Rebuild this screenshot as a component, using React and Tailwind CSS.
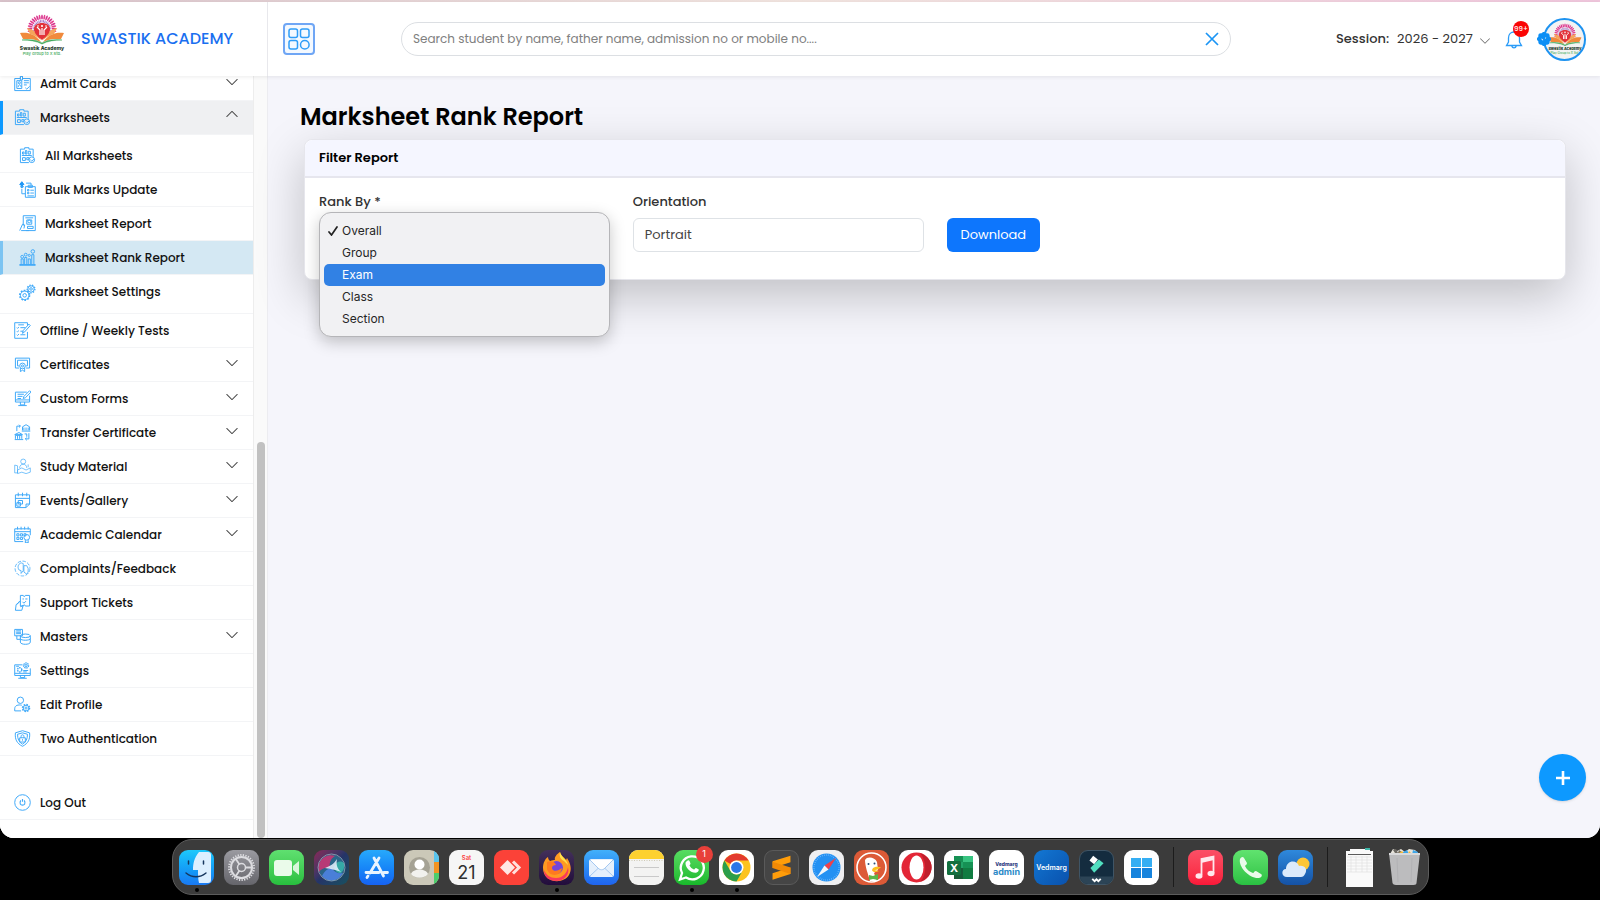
import { useState } from 'react';
import clsx from 'clsx';
import { BsChevronDown, BsChevronUp, BsPatchCheckFill } from 'react-icons/bs';

// Sidebar icons, 24x24 line drawings
const ICONS = {
  admit: (
    <>
      <path d="M1 5h8v-3h3v3h11v17H1z M4 8h7v11H4z M6 17c0-4 4-4 4 0 M14 8h7 M14 11h7 M14 14h4" />
      <circle cx="7.5" cy="11" r="1.5" />
      <path d="M16 18l2 2 4-4 M9 2v5h3V2" />
    </>
  ),
  marksheet: (
    <>
      <path d="M2 3h6V1h6v2h6v11M14 22H2V3 M5 10V7h2v3zM9 10V5h2v5zM13 10V6h3v4z M4 12h14 M5 15h4v4H5z M11 15h3v3h-3z" />
      <circle cx="18" cy="18" r="4" />
      <path d="M16 18l2 2 3-3" />
    </>
  ),
  bulk: (
    <>
      <path fill="#1b95f5" stroke="#1b95f5" d="M4 1l3 4H5v4H3V5H1z" />
      <path d="M2 8h5 M4 11v7h5 M10 3h7v3 M9 8h14v15H9z M13 6h6v3h-6z M12 12h2v2h-2z M12 16h2v2h-2z M16 13h5 M16 17h5 M12 21h9" />
    </>
  ),
  report: (
    <>
      <path d="M6 15V1h17v21H10 M9 4h11 M11 7h7v6h-7z M1 22l4-9 3 1-1 5 M12 16h8v3h-8z M3 22h11" />
      <circle cx="14.5" cy="9" r="2" />
    </>
  ),
  rank: (
    <>
      <path d="M1 22h22v1H1z M3 22v-8h3v8 M8 22V12h3v10 M13 22v-8h3v8 M18 22V8h3v14" />
      <circle cx="4.500" cy="11" r="2" />
      <circle cx="9.500" cy="8" r="2" />
      <circle cx="14.500" cy="9" r="1.500" />
      <circle cx="19.500" cy="3.500" r="2.500" />
    </>
  ),
  gears: (
    <>
      <circle cx="8" cy="16" r="6" />
      <circle cx="8" cy="16" r="7" strokeDasharray="2.400 2" strokeWidth="2" />
      <circle cx="8" cy="16" r="2.500" />
      <circle cx="17" cy="7" r="4.500" />
      <circle cx="17" cy="7" r="5.500" strokeDasharray="2 1.800" strokeWidth="1.800" />
      <circle cx="17" cy="7" r="1.800" />
    </>
  ),
  test: (
    <path d="M19 5V1H1v22h18v-9 M6 4h8 M4 8l1 1 2-2 M4 13l1 1 2-2 M4 18l1 1 2-2 M9 8h7 M9 13h4 M9 18h7 M12 16l1-4 8-9 2 2-8 9z" />
  ),
  certificate: (
    <>
      <path d="M7 17H2V3h20v14h-5 M5 6h14v8h-2 M7 14H5V6 M9 17v5l3-2 3 2v-5" />
      <circle cx="12" cy="14" r="4" />
      <circle cx="12" cy="14" r="1.500" />
    </>
  ),
  forms: (
    <path d="M18 3H2v14h20V8 M2 14h20 M9 17v4h6v-4 M6 22h12 M5 6h9 M5 9h7 M5 12h5 M13 12l1-3 8-8 2 2-8 8z" />
  ),
  transfer: (
    <path d="M11 10h12 M12 9V4l5-3 5 3v5 M14 5v4 M17 5v4 M20 5v4 M1 22h12 M2 21v-5h9v5 M1 15l6-3 5 3z M5 16v5 M8 16v5 M4 10V3h5 M7 1l2 2-2 2 M21 13v8h-5 M18 19l-2 2 2 2 M15 14h3v4" />
  ),
  study: (
    <g strokeOpacity="0.7">
      <circle cx="13" cy="5" r="3.500" />
      <path d="M8 14c0-7 10-7 10 0 M1 10l4 1v10h-4z M5 17l6-3 6 3 6-3v6l-6 2-6-2-6 2z M20 9v4" />
    </g>
  ),
  events: (
    <path d="M2 4h20v13l-5 5H2z M2 9h20 M6 1v5 M12 1v5 M18 1v5 M22 17h-5v5 M6 12h6v5H6z M4 15h5v5H4z" />
  ),
  calendar: (
    <>
      <path d="M1 4h22v9 M13 22H1V4 M1 8h22 M5 1v4 M10 1v4 M15 1v4 M20 1v4 M4 11h3v3H4z M9 11h3v3H9z M14 11h3v3h-3z M4 16h3v3H4z M9 16h3v3H9z" />
      <circle cx="18" cy="16" r="4" />
      <path d="M16 20v4l2-1 2 1v-4" />
    </>
  ),
  complaints: (
    <g strokeOpacity="0.8">
      <circle cx="12" cy="12" r="10.500" strokeDasharray="5 2" />
      <path d="M10 4c-5 2-5 7-3 10l3 1v4l3-4V5z M14 8h4l2 4v5l-2 3-4-3z" />
    </g>
  ),
  tickets: (
    <path d="M9 2h4c0 2 3 2 3 0h6v15h-6c0-2-3-2-3 0H9z M12 7h2 M16 7h3 M9 10l-6 5-1 8h9l2-7-4 2 M4 15l4-5 M12 11l2 2 3-3" />
  ),
  masters: (
    <>
      <path d="M1 2h11v9H1z M3 4h7 M3 6h7 M3 8h7 M4 11v5h5" />
      <ellipse cx="16" cy="11" rx="7" ry="2.500" />
      <path d="M9 11v9c0 4 14 4 14 0v-9 M9 15c0 3 14 3 14 0" />
    </>
  ),
  settings: (
    <>
      <path d="M12 4H1v15h22V9 M1 16h22 M9 19v3h6v-3 M6 23h12 M3 6h4" />
      <circle cx="17" cy="5" r="3.500" strokeDasharray="2 1" strokeWidth="2" />
      <circle cx="17" cy="5" r="1.500" />
      <circle cx="8" cy="11" r="3" strokeDasharray="2 1" strokeWidth="2" />
      <path d="M13 12h7 M13 14h5" />
    </>
  ),
  profile: (
    <>
      <circle cx="9" cy="6" r="4.500" />
      <path d="M1 21v-3c0-5 5-6 10-5 M1 21h9" />
      <circle cx="17" cy="17" r="4" />
      <circle cx="17" cy="17" r="5" strokeDasharray="2.200 1.700" strokeWidth="2" />
      <circle cx="17" cy="17" r="1.500" />
    </>
  ),
  shield: (
    <path d="M12 1l10 3c1 9-2 15-10 19C4 19 1 13 2 4z M12 4l7 2c0 7-2 11-7 14-5-3-7-7-7-14z M8 11h8v6H8z M10 11V9c0-3 4-3 4 0v2 M12 13v2" />
  ),
  logout: (
    <>
      <circle cx="12" cy="12" r="11" />
      <path d="M9.500 9c-5 9 10 9 5 0 M12 7v4" strokeWidth="1.600" />
    </>
  ),
};

const MENU = [
  { label: 'Admit Cards', icon: 'admit', more: true },
  {
    label: 'Marksheets',
    icon: 'marksheet',
    open: true,
    children: [
      { label: 'All Marksheets', icon: 'marksheet' },
      { label: 'Bulk Marks Update', icon: 'bulk' },
      { label: 'Marksheet Report', icon: 'report' },
      { label: 'Marksheet Rank Report', icon: 'rank', active: true },
      { label: 'Marksheet Settings', icon: 'gears' },
    ],
  },
  { label: 'Offline / Weekly Tests', icon: 'test' },
  { label: 'Certificates', icon: 'certificate', more: true },
  { label: 'Custom Forms', icon: 'forms', more: true },
  { label: 'Transfer Certificate', icon: 'transfer', more: true },
  { label: 'Study Material', icon: 'study', more: true },
  { label: 'Events/Gallery', icon: 'events', more: true },
  { label: 'Academic Calendar', icon: 'calendar', more: true },
  { label: 'Complaints/Feedback', icon: 'complaints' },
  { label: 'Support Tickets', icon: 'tickets' },
  { label: 'Masters', icon: 'masters', more: true },
  { label: 'Settings', icon: 'settings' },
  { label: 'Edit Profile', icon: 'profile' },
  { label: 'Two Authentication', icon: 'shield' },
];

const RANK_OPTIONS = ['Overall', 'Group', 'Exam', 'Class', 'Section'];

function MenuIcon({ name }) {
  return (
    <svg viewBox="0 0 24 24" className="size-[17px] shrink-0 text-[#3fa9f9]" fill="none" stroke="currentColor" strokeWidth="1.4">
      {ICONS[name]}
    </svg>
  );
}

function Logo({ className }) {
  const petals = Array.from({ length: 19 }, (_, i) => -100 + i * (200 / 18));
  return (
    <svg viewBox="0 0 48 42" className={clsx("font-['Inter',sans-serif]", className)}>
      {petals.map((a, i) => (
        <g key={a} transform={`rotate(${a} 24 15)`}>
          <ellipse cx="24" cy="3" rx="0.9" ry="2.6" fill={i % 2 ? '#d6338f' : '#e5408f'} />
          <path d="M24 6v2.500" stroke="#a678c8" strokeWidth="1" />
        </g>
      ))}
      <path d="M2 19c8-1 15 1 21 9-8-4-13-3-18-3z M46 19c-8-1-15 1-21 9 8-4 13-3 18-3z" fill="#f08a3c" />
      <path d="M9 14c6 1 11 5 14 12-5-4-8-5-11-6z M39 14c-6 1-11 5-14 12 5-4 8-5 11-6z" fill="#f5a55c" />
      <path d="M24 26c-5-4-8-7-8-11 0-8 16-8 16 0 0 4-3 7-8 11z" fill="#e2323a" />
      <path d="M19 13l3 3v5 M29 13l-3 3v5 M24 14v7" stroke="#fff" strokeWidth="1.2" fill="none" />
      <circle cx="24" cy="12" r="1.1" fill="#fff" />
      <circle cx="20" cy="12" r="0.8" fill="#fff" />
      <circle cx="28" cy="12" r="0.8" fill="#fff" />
      <path d="M4 26c9-1 15 0 20 3 5-3 11-4 20-3-8 0-14 1-20 4-6-3-12-4-20-4z" fill="#3aa655" stroke="#3aa655" strokeWidth="0.5" />
      <text x="24" y="35.500" textAnchor="middle" fontSize="5" fontWeight="800" fill="#1f3b2c">Swastik Academy</text>
      <text x="24" y="40.500" textAnchor="middle" fontSize="4" fontWeight="600" fill="#58b370">Play Group to X Std.</text>
    </svg>
  );
}

function MenuRow({ item, sub }) {
  return (
    <a
      href="#"
      className={clsx(
        'flex h-[34px] items-center gap-[9px] border-b border-[#f3f4f6] text-[12px] font-medium text-[#111] last:border-b-[#f3f4f6]',
        item.open && 'border-l-3 border-l-[#0d99ff] bg-[#eff0f2] pl-[11px]',
        item.active && 'border-l-3 border-l-[#7cc4f2] bg-[#d4e8f3] pl-4',
        sub && !item.active && 'pl-[19px] last:border-b-0',
        !sub && !item.open && 'pl-3.5'
      )}
    >
      <MenuIcon name={item.icon} />
      <span>{item.label}</span>
      {item.more && <BsChevronDown className="mr-3.5 mb-1 ml-auto size-3.5 text-[#444]" />}
      {item.open && <BsChevronUp className="mr-3.5 mb-2 ml-auto size-3.5 text-[#444]" />}
    </a>
  );
}

function Sidebar() {
  return (
    <aside className="flex w-[268px] shrink-0 overflow-hidden border-r border-[#ececf0] bg-[#fafafa]">
      <nav className="-mt-[9px] w-[254px] shrink-0 border-r border-[#ededed] bg-white">
        {MENU.map((item) => (
          <div key={item.label}>
            <MenuRow item={item} />
            {item.children && (
              <div className="border-b border-[#f3f4f6] py-1">
                {item.children.map((child) => (
                  <MenuRow key={child.label} item={child} sub />
                ))}
              </div>
            )}
          </div>
        ))}
        <div className="mt-[30px]">
          <MenuRow item={{ label: 'Log Out', icon: 'logout' }} />
        </div>
      </nav>
      <div className="flex flex-1 flex-col items-center justify-end">
        <div className="h-[52%] w-2 rounded-full bg-[#c1c1c1]" />
      </div>
    </aside>
  );
}

function Header() {
  return (
    <header className="z-10 flex h-[74px] shrink-0 items-center bg-white shadow-[0_1px_4px_rgba(0,0,0,0.08)]">
      <div className="flex h-full w-[268px] shrink-0 items-center border-r border-[#e8e8ec] pl-[18px]">
        <Logo className="mb-2 h-[42px] w-12" />
        <span className="ml-[15px] text-[16px] font-medium text-[#1a6ff0]">SWASTIK ACADEMY</span>
      </div>
      <button type="button" aria-label="Menu" className="ml-[15px] flex size-8 shrink-0 items-center justify-center rounded border-2 border-[#6fa6f5] bg-[#f4f9ff]">
        <svg viewBox="0 0 22 22" className="size-[22px] shrink-0" fill="none" stroke="#2f9df8" strokeWidth="1.500">
          <rect x="1" y="1" width="8.500" height="8.500" rx="2" />
          <rect x="12.500" y="1" width="8.500" height="8.500" rx="2" />
          <rect x="1" y="12.500" width="8.500" height="8.500" rx="2" />
          <circle cx="16.800" cy="16.800" r="4.300" />
        </svg>
      </button>
      <div className="mr-[105px] ml-[86px] flex h-[34px] flex-1 items-center rounded-full border border-[#dcdfe3] pr-[11px] pl-[11px]">
        <input
          type="text"
          aria-label="Search student"
          placeholder="Search student by name, father name, admission no or mobile no...."
          className="min-w-0 flex-1 text-[12px] outline-none placeholder:text-[#808080]"
        />
        <button type="button" aria-label="Clear" className="text-[#1b95f5]">
          <svg viewBox="0 0 14 14" className="size-3.5" stroke="currentColor" strokeWidth="1.700">
            <path d="M1 1l12 12M13 1L1 13" />
          </svg>
        </button>
      </div>
      <div className="mr-3.5 flex w-[250px] shrink-0 items-center">
        <label htmlFor="session" className="text-[13px] font-medium text-[#333]">Session:</label>
        <div className="relative ml-2">
          <select id="session" className="block w-[94px] appearance-none text-[13px] text-[#333]">
            <option>2026 - 2027</option>
          </select>
          <BsChevronDown className="pointer-events-none absolute top-1.5 right-0 size-3 text-[#666]" />
        </div>
        <button type="button" aria-label="Notifications" className="relative ml-auto">
          <svg viewBox="0 0 18 20" className="h-5 w-[18px]" fill="none" stroke="#2b9cf8" strokeWidth="1.300">
            <path d="M9 1.500v1.500 M3.500 9c0-8 11-8 11 0v4l2 3.500H1.500l2-3.500z M6.800 17c.5 2.500 3.900 2.500 4.400 0" />
          </svg>
          <span className="absolute -top-2 left-2 flex size-4 items-center justify-center rounded-full bg-[#fa0505] text-[7px] font-medium text-white">99+</span>
        </button>
        <div className="relative ml-5">
          <div className="flex size-[43px] items-center justify-center overflow-hidden rounded-full border-2 border-[#1e93f0] bg-[#f3f3f3]">
            <Logo className="h-8 w-9" />
          </div>
          <BsPatchCheckFill className="absolute top-3.5 -left-1.5 size-3.5 text-[#0d8ff5]" />
        </div>
      </div>
    </header>
  );
}

function RankMenu({ value, onChange }) {
  return (
    <ul
      role="listbox"
      aria-label="Rank By"
      className="absolute -top-1.5 right-0 left-0 z-20 rounded-xl border border-[#b5b5b8] bg-[#f1f1f3] px-1 pt-[7px] pb-1.5 font-['Inter',sans-serif] text-[12px] text-[#262626] shadow-[0_5px_16px_rgba(0,0,0,0.22)]"
    >
      {RANK_OPTIONS.map((opt) => (
        <li
          key={opt}
          role="option"
          aria-selected={opt === value}
          onClick={() => onChange(opt)}
          className={clsx('flex h-[22px] items-center rounded-[5px]', opt === 'Exam' && 'bg-[#3181e4] text-white')}
        >
          <span className="flex w-[18px] pl-1">
            {opt === value && (
              <svg viewBox="0 0 10 10" className="size-2.5" fill="none" stroke="#222" strokeWidth="1.700" strokeLinecap="round">
                <path d="M1 6l2.500 3L9 1" />
              </svg>
            )}
          </span>
          {opt}
        </li>
      ))}
    </ul>
  );
}

function Report() {
  const [rankBy, setRankBy] = useState('Overall');
  const control = 'h-[34px] w-full appearance-none rounded-md border border-[#dee2e6] bg-white px-[11px] text-[13px] text-[#444]';

  return (
    <main className="relative flex-1 bg-[#f5f5fb] pt-[23px] pr-[34px] pl-9">
      <h1 className="-ml-1 text-[24px] leading-9 font-semibold text-black">Marksheet Rank Report</h1>
      <section className="mt-1 rounded-lg border border-[#e6e6ec] bg-white shadow-[0_16px_48px_rgba(0,0,0,0.22)]">
        <h2 className="flex h-[38px] items-center rounded-t-lg border-b-2 border-[#e6e6ee] bg-[#f5f6ff] px-3.5 text-[13px] font-semibold text-black">
          Filter Report
        </h2>
        <form className="grid grid-cols-4 gap-x-[23px] px-3.5 pt-3.5 pb-[27px]" onSubmit={(e) => e.preventDefault()}>
          <div>
            <label htmlFor="rank" className="block h-[26px] text-[13px] leading-5 font-medium text-[#333]">Rank By *</label>
            <div className="relative">
              <select id="rank" className={control} value={rankBy} onChange={(e) => setRankBy(e.target.value)}>
                {RANK_OPTIONS.map((opt) => (
                  <option key={opt}>{opt}</option>
                ))}
              </select>
              <RankMenu value={rankBy} onChange={setRankBy} />
            </div>
          </div>
          <div>
            <label htmlFor="orientation" className="block h-[26px] text-[13px] leading-5 font-medium text-[#333]">Orientation</label>
            <select id="orientation" className={control}>
              <option>Portrait</option>
              <option>Landscape</option>
            </select>
          </div>
          <div className="flex items-end">
            <button type="submit" className="h-[34px] rounded-md bg-[#0d76fd] px-3.5 text-[13px] text-white">Download</button>
          </div>
        </form>
      </section>
      <button type="button" aria-label="Add" className="absolute right-3.5 bottom-[37px] flex size-[47px] items-center justify-center rounded-full bg-[#0d99ff] shadow-sm">
        <svg viewBox="0 0 16 16" className="size-4" stroke="#fff" strokeWidth="2.600">
          <path d="M8 1v14M1 8h14" />
        </svg>
      </button>
    </main>
  );
}

// Dock artwork, each drawn on a 35x35 tile
const DOCK = [
  {
    name: 'Finder', bg: 'bg-gradient-to-b from-[#1fc8fb] to-[#1a78f2]', running: true,
    art: (
      <>
        <path d="M20 2C15 8 14 14 14 20h5c0 5 0 9 1 13h9c2 0 3-1 3-3V5c0-2-1-3-3-3z" fill="#dcefff" />
        <path d="M9.500 11v3 M24.500 11v3" stroke="#16365e" strokeWidth="1.500" strokeLinecap="round" />
        <path d="M7 23c6 5 14 5 20 0" fill="none" stroke="#16365e" strokeWidth="1.400" strokeLinecap="round" />
      </>
    ),
  },
  {
    name: 'System Settings', bg: 'bg-gradient-to-b from-[#9a9aa0] to-[#66666c]',
    art: (
      <g fill="none" stroke="#dcdce0">
        <circle cx="17.500" cy="17.500" r="12.500" strokeWidth="2" strokeDasharray="1.300 1.300" />
        <circle cx="17.500" cy="17.500" r="10.500" strokeWidth="2" />
        <circle cx="17.500" cy="17.500" r="4" strokeWidth="1.500" />
        <path d="M21 17.500h7 M15.500 14.500l-4-6 M15.500 20.500l-4 6" strokeWidth="1.800" />
      </g>
    ),
  },
  {
    name: 'FaceTime', bg: 'bg-gradient-to-b from-[#5fe070] to-[#27bf3e]',
    art: (
      <>
        <rect x="5" y="10" width="18" height="16" rx="3" fill="#eafbea" />
        <path d="M24 16l6-5v14l-6-5z" fill="#d8f6da" />
      </>
    ),
  },
  {
    name: 'Siri', bg: 'bg-gradient-to-br from-[#8a2358] via-[#253468] to-[#16515f]',
    art: (
      <>
        <circle cx="17.500" cy="17.500" r="13" fill="#2b6488" />
        <path d="M5 22C2 11 12 3 21 6c-5 3-6 8-5 12-5-1-9 1-11 4z" fill="#b83a76" />
        <path d="M8 26c3-6 7-8 10-8 2 4 6 6 11 5-5 9-15 10-21 3z" fill="#4a7fd8" />
        <path d="M20 17c2-5 6-7 10-4 1 5-1 8-3 10-4 0-6-2-7-6z" fill="#35a9a6" />
        <path d="M11 18c5-2 8-3 12-9-1 6 0 9 4 13-5-2-9-3-16-4z" fill="#e9f2ff" opacity="0.85" />
        <circle cx="17.500" cy="17.500" r="13.500" fill="none" stroke="#9fb6c4" strokeOpacity="0.7" />
      </>
    ),
  },
  {
    name: 'App Store', bg: 'bg-gradient-to-b from-[#28a9fb] to-[#1762f3]',
    art: (
      <g stroke="#e9f4ff" strokeWidth="2.800" strokeLinecap="round">
        <path d="M15 8l9.500 18 M20 8l-9 15 M7 22.500h13 M25 22.500h3.500 M9 26l-1 1.500" />
      </g>
    ),
  },
  {
    name: 'Contacts', bg: 'bg-[#cbc8b8]',
    art: (
      <>
        <path d="M30 0h5v12h-5z" fill="#57c4ee" />
        <path d="M30 12h5v11h-5z" fill="#f39421" />
        <path d="M30 23h5v12h-5z" fill="#4ccd6b" />
        <circle cx="15.500" cy="17.500" r="10.500" fill="#a5a294" />
        <circle cx="15.500" cy="14.500" r="5" fill="#fff" />
        <path d="M7 24c2-6 15-6 17 0-4 5-13 5-17 0z" fill="#f2f2ee" />
      </>
    ),
  },
  {
    name: 'Calendar', bg: 'bg-[#f6f6f6]',
    art: (
      <>
        <text x="17.500" y="9.500" textAnchor="middle" fontSize="6" fontWeight="600" fill="#fb3f3f">Sat</text>
        <text x="17.500" y="29" textAnchor="middle" fontSize="18" fill="#2f2f2f">21</text>
      </>
    ),
  },
  {
    name: 'AnyDesk', bg: 'bg-[#fb4238]',
    art: (
      <>
        <path d="M6 17.500l7.500-7.500 7.500 7.500-7.500 7.500z" fill="#ffe6e3" />
        <path d="M19 11.500l6 6-6 6" fill="none" stroke="#ffe0dd" strokeWidth="3" />
      </>
    ),
  },
  {
    name: 'Firefox', bg: 'bg-gradient-to-b from-[#43305a] to-[#220c3c]', running: true,
    art: (
      <>
        <path d="M4 18C4 13 6 9 9 7c0 2 1 3 2 4 2-1 4-1 5-1-1-3 2-6 5-8 1 4 4 5 6 8l1-2c4 6 5 12 2 17-6 10-26 8-26-7z" fill="#ff9a22" />
        <path d="M5 20c2 5 6 8 12 8 7 0 11-5 12-11 2 8-4 14-12 14C10 31 5 27 5 20z" fill="#f9385d" />
        <path d="M21 2c1 5 7 7 8 13l-4-4c-4-2-5-5-4-9z" fill="#ffe14b" />
        <circle cx="17.500" cy="17.500" r="6.500" fill="#7545d8" />
        <path d="M8 12c4-2 8 0 9 3-4 0-5 3-3 5 3 2 6 0 9-2-1 9-13 9-15 1z" fill="#ff7a1f" />
      </>
    ),
  },
  {
    name: 'Mail', bg: 'bg-gradient-to-b from-[#42b0fa] to-[#2063ee]',
    art: (
      <>
        <rect x="5" y="9" width="25" height="18" rx="2.500" fill="#e5f0fc" />
        <path d="M6 26l8.500-8 M29 26l-8.500-8" stroke="#a5c8f0" />
        <path d="M6 10l9 9c2 1 3 1 5 0l9-9" fill="#fff" stroke="#a5c8f0" />
      </>
    ),
  },
  {
    name: 'Notes', bg: 'bg-[#f3f3f2]',
    art: (
      <>
        <path d="M0 0h35v9H0z" fill="#fdd12f" />
        <path d="M0 10.500h35" stroke="#cfcab5" strokeDasharray="1 1.500" />
        <path d="M5 17.500h25 M5 26.500h25" stroke="#c9c9c9" />
      </>
    ),
  },
  {
    name: 'WhatsApp', bg: 'bg-gradient-to-b from-[#57dc62] to-[#16b92a]', running: true, badge: '1',
    art: (
      <>
        <path d="M6 29.500l2-6.500A11.500 11.500 0 1 1 12 27.500z" fill="none" stroke="#fff" strokeWidth="2.300" />
        <path d="M13 11c1-1 2-1 2.500 0l1 2.500c0 1-1 1.500-1 2 1 2 2.500 3.200 4.500 4 .7 0 1-1.500 2-1.500l2.500 1.200c1 1-1 3.500-3 3.500-5 0-10-5-10-9.500 0-1 .7-1.700 1.500-2.200z" fill="#fff" />
      </>
    ),
  },
  {
    name: 'Chrome', bg: 'bg-white', running: true,
    art: (
      <>
        <circle cx="17.500" cy="17.500" r="14" fill="#fcc31e" />
        <path d="M5.400 10.500a14 14 0 0 1 24.200 0H17.500a7 7 0 0 0-6 3.500z" fill="#e33b2e" />
        <path d="M5.400 10.500a14 14 0 0 0 12.100 21l6-10.500a7 7 0 0 1-12 0z" fill="#2b9e4b" />
        <circle cx="17.500" cy="17.500" r="7" fill="#fff" />
        <circle cx="17.500" cy="17.500" r="5.400" fill="#2b77e8" />
      </>
    ),
  },
  {
    name: 'Sublime Text', bg: 'border border-[#5a5a5a] bg-[#454545]',
    art: (
      <>
        <path d="M8 11l19-6v7l-19 6z M8 23.500l19-6v7l-19 6z" fill="#ff9d0a" />
        <path d="M8 11.500l19 6v7l-19-6.500z" fill="#f28a05" />
      </>
    ),
  },
  {
    name: 'Safari', bg: 'bg-[#efeff1]',
    art: (
      <>
        <circle cx="17.500" cy="17.500" r="14" fill="#2491f3" />
        <circle cx="17.500" cy="17.500" r="12.500" fill="none" stroke="#8fcaff" strokeWidth="1.500" strokeDasharray="0.500 1.500" />
        <path d="M27 8l-7.500 11.500-4-4z" fill="#f0414b" />
        <path d="M8 27l7.500-11.500 4 4z" fill="#f3f6fa" />
      </>
    ),
  },
  {
    name: 'DuckDuckGo', bg: 'bg-[#dc5a37]',
    art: (
      <>
        <circle cx="17.500" cy="17.500" r="14.500" fill="none" stroke="#fff" strokeWidth="1.600" />
        <path d="M11 10c2-4 10-3 12 2l1 8-4 3 3 8h-7c-2-7-5-15-5-21z" fill="#fff" />
        <path d="M19 18c3-2 5-1 8-1-2 2-3 3-7 3l5 1c-3 2-7 1-7-1z" fill="#fcbf1f" />
        <path d="M15 25l4 1 5-2v6l-5-1-4 1z" fill="#5cb748" />
        <circle cx="20.500" cy="13.500" r="1" fill="#2b4c77" />
        <circle cx="14.500" cy="14" r="1" fill="#2b4c77" />
      </>
    ),
  },
  {
    name: 'Opera', bg: 'bg-white',
    art: (
      <>
        <circle cx="17.500" cy="17.500" r="15" fill="#e32636" />
        <path d="M21 3c16 6 15 23 0 29 7-7 7-21 0-29z" fill="#c01f2c" />
        <ellipse cx="17.500" cy="17.500" rx="7" ry="12" fill="#fff" />
      </>
    ),
  },
  {
    name: 'Excel', bg: 'bg-white',
    art: (
      <>
        <path d="M10 6h19v23H10z" fill="#21a366" />
        <path d="M10 6h9v6h-9z M19 12h10v6H19z" fill="#169154" />
        <path d="M19 6h10v6H19z" fill="#38c481" />
        <path d="M10 18h9v11h-9z" fill="#185c37" />
        <path d="M19 18h10v11H19z" fill="#107c41" />
        <rect x="3" y="11" width="14" height="14" rx="1.500" fill="#12703e" />
        <text x="10" y="22" textAnchor="middle" fontSize="11" fontWeight="700" fill="#fff">X</text>
      </>
    ),
  },
  {
    name: 'Vedmarg admin', bg: 'bg-white',
    art: (
      <>
        <text x="17.500" y="16" textAnchor="middle" fontSize="5" fontWeight="800" fill="#2d3a80">Vedmarg</text>
        <text x="17.500" y="25" textAnchor="middle" fontSize="9" fontWeight="700" fill="#2c8ac8">admin</text>
      </>
    ),
  },
  {
    name: 'Vedmarg', bg: 'bg-gradient-to-br from-[#1377d3] to-[#0a51ad]',
    art: <text x="17.500" y="20" textAnchor="middle" fontSize="7" fontWeight="600" fill="#fff">Vedmarg</text>,
  },
  {
    name: 'Filmora', bg: 'border border-[#3f5566] bg-[#142c3f]',
    art: (
      <>
        <path d="M14 5l5 4-4 5-5-4z" fill="#fff" />
        <path d="M20 9l5 4-10 10-4-5z" fill="#50dfc0" />
        <path d="M0 27h35v8H0z" fill="#2c4456" />
        <path d="M13 29.500l2.500 2.500 2-2 2 2 2.500-2.500" fill="none" stroke="#fff" strokeWidth="2" />
      </>
    ),
  },
  {
    name: 'Windows App', bg: 'bg-white',
    art: (
      <>
        <path d="M7 8h10v9H7z M18 8h10v9H18z" fill="#35aef3" />
        <path d="M7 18h10v10H7z M18 18h10v10H18z" fill="#1583dd" />
      </>
    ),
  },
  { divider: true, name: 'apps-end' },
  {
    name: 'Music', bg: 'bg-gradient-to-b from-[#fb4f66] to-[#fa1739]',
    art: (
      <>
        <path d="M13.500 25V9l12-2.500V23" fill="none" stroke="#ffe8ec" strokeWidth="1.800" />
        <path d="M13 9l13-3v4l-13 3z" fill="#ffe8ec" />
        <ellipse cx="11" cy="26" rx="3.500" ry="2.800" fill="#ffe8ec" />
        <ellipse cx="23" cy="23.500" rx="3.500" ry="2.800" fill="#ffe8ec" />
      </>
    ),
  },
  {
    name: 'Phone', bg: 'bg-gradient-to-b from-[#60e36f] to-[#29c142]',
    art: (
      <path d="M7 9c1-2 3-3 4-1l3 5c0 2-2 2-2 3 2 4 5 6 8 7 1 0 1-2 3-2l5 3c2 1 0 4-2 4C17 29 5 17 7 9z" fill="#eafbea" />
    ),
  },
  {
    name: 'Weather', bg: 'bg-gradient-to-b from-[#2f89dc] to-[#1552a6]',
    art: (
      <>
        <circle cx="25" cy="14" r="6.500" fill="#fdc637" />
        <path d="M9 27c-6 0-6-8-1-8 0-9 11-10 13-3 6-1 9 4 6 8-1 2-2 3-4 3z" fill="#dceafb" />
      </>
    ),
  },
  { divider: true, name: 'files' },
  {
    name: 'Document', bg: '',
    art: (
      <>
        <path d="M4 1h4v-2h20v2h3v36H4z" fill="#fafafa" />
        <path d="M23 -2h5v2h-5z" fill="#3fb6a8" />
        <path d="M6 4.500h23" stroke="#333" strokeWidth="0.800" />
        <path d="M5 7h25 M5 10h25 M5 13h25 M5 16h25 M5 19h25 M5 22h25 M9 6v16 M14 6v16 M20 6v16 M25 6v16" stroke="#dedede" strokeWidth="0.600" />
      </>
    ),
  },
  {
    name: 'Trash', bg: '',
    art: (
      <>
        <path d="M3 4l3-5 4 2 4-2 4 3 4-3 6 1 4 4z" fill="#e7e4dc" />
        <path d="M6 0l3-1 2 4H8z M12 0l4 3h-5z" fill="#6d6a63" />
        <path d="M16 2l4-2 2 4h-6z M26 0l5 2-1 3h-5z" fill="#3fa6e8" />
        <path d="M12 3l3-2 2 3h-5z M22 1l3 3h-4z" fill="#f3b93a" />
        <path d="M2 3h31l-3.500 30c0 1-1 2-3 2H9c-2 0-3-1-3.500-2z" fill="#bcbcbe" />
        <path d="M2 3h31v2H2z" fill="#dadadb" />
        <path d="M10 8l1 24 M25 8l-1 24" stroke="#b2b2b5" />
      </>
    ),
  },
];

function Dock() {
  return (
    <footer className="flex shrink-0 justify-center pt-px pb-[5px] font-['Inter',sans-serif]">
      <div className="flex h-14 items-center gap-2.5 rounded-[20px] border border-[#5c5c5c] bg-[#3b3b3b] px-1.5">
        {DOCK.map((app) =>
          app.divider ? (
            <div key={app.name} className="mx-1 h-10 w-px bg-[#1c1c1c]" />
          ) : (
            <button key={app.name} type="button" aria-label={app.name} className="relative size-[35px] shrink-0">
              <span className={clsx('block size-[35px] rounded-[9px]', app.bg, app.bg && 'overflow-hidden')}>
                <svg viewBox="0 0 35 35" className="size-full overflow-visible">{app.art}</svg>
              </span>
              {app.badge && (
                <span className="absolute -top-1 -right-1 flex size-[17px] items-center justify-center rounded-full bg-[#e8403a] text-[9px] text-white">
                  {app.badge}
                </span>
              )}
              {app.running && <span className="absolute -bottom-[7px] left-4 size-1 rounded-full bg-black" />}
            </button>
          )
        )}
      </div>
    </footer>
  );
}

export default function App() {
  return (
    <div className="flex h-screen flex-col bg-black font-['Poppins','Inter',sans-serif]">
      <div className="flex min-h-0 flex-1 flex-col overflow-hidden rounded-b-[14px] bg-white">
        <div className="h-0.5 shrink-0 bg-gradient-to-r from-[#d9c3cb] via-[#f1e4df] to-[#efc6dc]" />
        <Header />
        <div className="flex min-h-0 flex-1">
          <Sidebar />
          <Report />
        </div>
      </div>
      <Dock />
    </div>
  );
}
